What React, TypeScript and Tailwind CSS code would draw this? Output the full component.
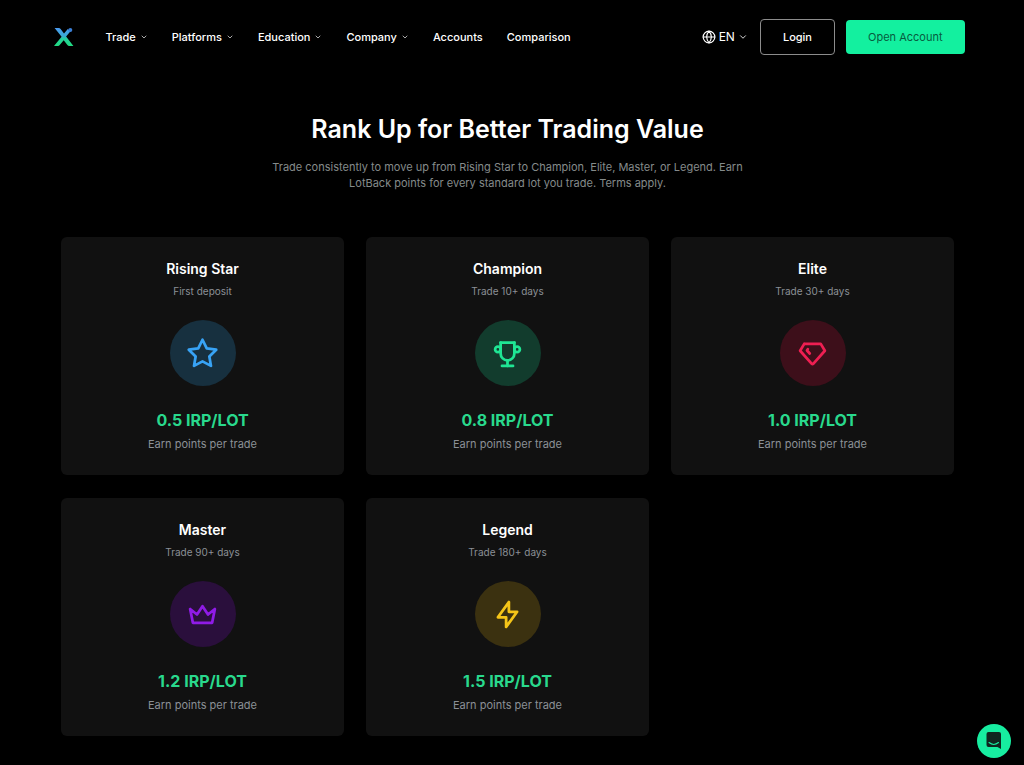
import { FiGlobe } from "react-icons/fi";
import { TbBolt, TbChevronDown, TbCrown, TbDiamond, TbStar, TbTrophy } from "react-icons/tb";

const NAV_ITEMS = [
  { label: "Trade", hasMenu: true },
  { label: "Platforms", hasMenu: true },
  { label: "Education", hasMenu: true },
  { label: "Company", hasMenu: true },
  { label: "Accounts", hasMenu: false },
  { label: "Comparison", hasMenu: false },
];

const RANKS = [
  { name: "Rising Star", rule: "First deposit", rate: "0.5 IRP/LOT", Icon: TbStar, color: "bg-[#17303f] text-[#38a3f5]" },
  { name: "Champion", rule: "Trade 10+ days", rate: "0.8 IRP/LOT", Icon: TbTrophy, color: "bg-[#123c2d] text-[#1fe694]" },
  { name: "Elite", rule: "Trade 30+ days", rate: "1.0 IRP/LOT", Icon: TbDiamond, color: "bg-[#3d0f1a] text-[#ee1f52]" },
  { name: "Master", rule: "Trade 90+ days", rate: "1.2 IRP/LOT", Icon: TbCrown, color: "bg-[#2a0f3c] text-[#8f1be6]" },
  { name: "Legend", rule: "Trade 180+ days", rate: "1.5 IRP/LOT", Icon: TbBolt, color: "bg-[#3b3110] text-[#f5c518]" },
];

function Logo() {
  return (
    <svg viewBox="0 0 20 18" className="h-[18px] w-5" aria-hidden="true">
      <defs>
        <linearGradient id="logo" x1="0" y1="0" x2="0" y2="1">
          <stop offset="0" stopColor="#4b9af0" />
          <stop offset="0.45" stopColor="#39a9d2" />
          <stop offset="0.6" stopColor="#25cf9b" />
          <stop offset="1" stopColor="#20dc80" />
        </linearGradient>
      </defs>
      <path
        fill="url(#logo)"
        d="M.6 0h4.2c.8 0 1.300.300 1.800.900l3.400 4.500L13.800 1l2.700 2.300-4.400 5.100 7.300 9.600h-4.200c-.8 0-1.300-.3-1.800-.9l-3.700-4.900-4 4.800c-.6.700-1.100 1-2 1H0l7.600-9.300L.6 0z"
      />
      <circle cx="16.300" cy="2" r="2" fill="#3b7fd6" />
    </svg>
  );
}

function Header() {
  return (
    <header className="mx-auto flex w-full max-w-[914px] items-center pt-[19px] pl-[3px]">
      <a href="#" aria-label="Home">
        <Logo />
      </a>
      <nav className="ml-8 flex items-center gap-6 text-[11px] leading-4 font-medium text-white">
        {NAV_ITEMS.map((item) => (
          <a key={item.label} href="#" className="flex items-center gap-1">
            {item.label}
            {item.hasMenu && <TbChevronDown className="size-2" />}
          </a>
        ))}
      </nav>
      <div className="ml-auto flex items-center text-[11px] leading-4">
        <button type="button" className="mr-3 flex items-center gap-[3px] text-xs text-white">
          <FiGlobe className="size-3.5" />
          EN
          <TbChevronDown className="size-2.5" />
        </button>
        <button type="button" className="h-9 rounded-sm border border-[#8c8c8c] px-[22px] font-medium text-white">
          Login
        </button>
        <a href="#" className="ml-[11px] flex h-[34px] items-center rounded-sm bg-[#13f09f] px-[22px] text-[#075c40]">
          Open Account
        </a>
      </div>
    </header>
  );
}

function RankCard({ rank }: { rank: (typeof RANKS)[number] }) {
  const { name, rule, rate, Icon, color } = rank;

  return (
    <li className="flex flex-col items-center rounded-md bg-[#111111] pt-[22px] pb-[23px] text-center">
      <h2 className="text-sm leading-5 font-semibold text-white">{name}</h2>
      <p className="mt-1 text-[10px] leading-4 text-[#8b9096]">{rule}</p>
      <div className={`mt-[21px] flex size-[66px] items-center justify-center rounded-full ${color}`}>
        <Icon className="size-[33px]" />
      </div>
      <p className="mt-[22px] text-base leading-6 font-bold text-[#29d98d]">{rate}</p>
      <p className="mt-1 text-[11px] leading-4 text-[#8b9096]">Earn points per trade</p>
    </li>
  );
}

function App() {
  return (
    <div className="min-h-screen bg-black pr-[9px] pb-[29px] font-['Inter',sans-serif]">
      <Header />
      <main className="mx-auto w-full max-w-[893px] pt-14">
        <section className="text-center">
          <h1 className="text-[25px] leading-9 font-semibold text-white">Rank Up for Better Trading Value</h1>
          <p className="mx-auto mt-3 max-w-[480px] text-[11px] leading-4 text-[#858b8b]">
            Trade consistently to move up from Rising Star to Champion, Elite, Master, or Legend. Earn LotBack points
            for every standard lot you trade. Terms apply.
          </p>
        </section>
        <ul className="mt-[46px] grid grid-cols-3 gap-x-[22px] gap-y-[23px]">
          {RANKS.map((rank) => (
            <RankCard key={rank.name} rank={rank} />
          ))}
        </ul>
      </main>
      <button
        type="button"
        aria-label="Open chat"
        className="fixed right-[13px] bottom-[7px] flex size-[34px] items-center justify-center rounded-full bg-[#17eda0]"
      >
        <svg viewBox="0 0 16 18" className="h-[18px] w-4" aria-hidden="true">
          <path fill="#10261f" d="M2.5 0h10.5a2 2 0 0 1 2 2v15l-3.5-2h-9a2 2 0 0 1-2-2V2a2 2 0 0 1 2-2z" />
          <path d="M3 10.5c2.8 2.3 6.7 2.3 9.5 0" fill="none" stroke="#17eda0" strokeWidth="1.1" strokeLinecap="round" />
        </svg>
      </button>
    </div>
  );
}

export default App;
